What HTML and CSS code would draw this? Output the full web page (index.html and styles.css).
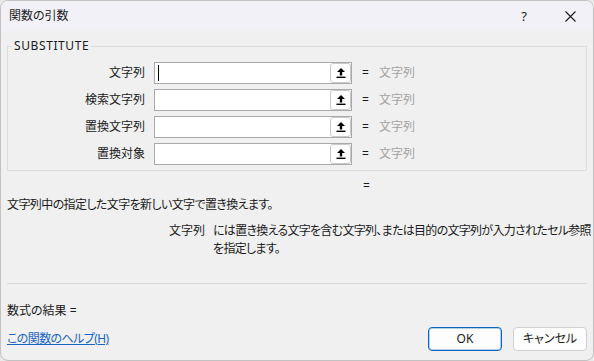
FILE: index.html
```html
<!DOCTYPE html>
<html lang="ja">
<head>
  <meta charset="UTF-8" />
  <meta name="viewport" content="width=device-width, initial-scale=1.0"/>
  <title>関数の引数</title>
  <link rel="stylesheet" href="styles.css">
</head>
<body>

  <div class="dialog">

    <!-- TITLE BAR -->
    <div class="titlebar">
      <div class="title">関数の引数</div>
      <div class="title-btn help">?</div>
      <div class="title-btn close">
        <svg width="11" height="11" viewBox="0 0 11 11">
          <path d="M0.5 0.5 L10.5 10.5 M10.5 0.5 L0.5 10.5" stroke="#1a1a1a" stroke-width="1.1" fill="none"/>
        </svg>
      </div>
    </div>

    <div class="content">

      <fieldset class="args">
        <legend>SUBSTITUTE</legend>

        <div class="arg-grid">
          <div class="arg-label">文字列</div>
          <div class="arg-input"><span class="caret"></span><span class="ref-btn"></span></div>
          <div class="eq">=</div>
          <div class="arg-value">文字列</div>

          <div class="arg-label">検索文字列</div>
          <div class="arg-input"><span></span><span class="ref-btn"></span></div>
          <div class="eq">=</div>
          <div class="arg-value">文字列</div>

          <div class="arg-label">置換文字列</div>
          <div class="arg-input"><span></span><span class="ref-btn"></span></div>
          <div class="eq">=</div>
          <div class="arg-value">文字列</div>

          <div class="arg-label">置換対象</div>
          <div class="arg-input"><span></span><span class="ref-btn"></span></div>
          <div class="eq">=</div>
          <div class="arg-value">文字列</div>
        </div>
      </fieldset>

      <div class="result-eq">=</div>
      <div class="func-desc">文字列中の指定した文字を新しい文字で置き換えます。</div>

      <div class="arg-help">
        <div class="arg-help-name">文字列</div>
        <div class="arg-help-text">には置き換える文字を含む文字列、または目的の文字列が入力されたセル参照を指定します。</div>
      </div>

      <div class="separator"></div>

      <div class="formula-result">数式の結果 =</div>

      <div class="footer">
        <a class="help-link" href="#">この関数のヘルプ(H)</a>
        <div class="buttons">
          <button class="btn btn-primary">OK</button>
          <button class="btn">キャンセル</button>
        </div>
      </div>

    </div>
  </div>

</body>
</html>
```

FILE: styles.css
```css
html {
  background: #e9e9e9;
}

body {
  margin: 0;
  font-family: "Noto Sans", "Noto Sans CJK JP", sans-serif;
  font-size: 12px;
  line-height: 16px;
  color: #1a1a1a;
  font-feature-settings: "palt";
}

.dialog {
  width: 594px;
  height: 361px;
  box-sizing: border-box;
  border: 1px solid #c2c2c2;
  border-radius: 8px;
  overflow: hidden;
  background: #f0f0f0;
  display: flex;
  flex-direction: column;
}

/* title bar */
.titlebar {
  height: 30px;
  flex-shrink: 0;
  background: #f3f1f8;
  display: flex;
  align-items: center;
}

.title {
  flex: 1;
  padding-left: 8px;
}

.title-btn {
  width: 46px;
  height: 30px;
  display: flex;
  align-items: center;
  justify-content: center;
}

.help {
  font-size: 13px;
}

/* body */
.content {
  padding: 0 6px;
  flex: 1;
}

.args {
  margin: 7px 0 0;
  padding: 8px 0 5px;
  border: 1px solid #dcdcdc;
  min-width: 0;
}

.args legend {
  margin-left: 4px;
  padding: 0 2px;
  line-height: 16px;
  letter-spacing: 0.6px;
}

.arg-grid {
  display: grid;
  grid-template-columns: 137px 198px 8px auto;
  column-gap: 9px;
  row-gap: 5px;
  align-items: center;
}

.arg-label {
  text-align: right;
}

.arg-input {
  height: 22px;
  box-sizing: border-box;
  border: 1px solid #a9a9a9;
  background: #fff;
  display: flex;
  justify-content: space-between;
  align-items: center;
  padding-left: 3px;
}

.caret {
  width: 1px;
  height: 16px;
  background: #000;
}

.ref-btn {
  width: 21px;
  height: 20px;
  box-sizing: border-box;
  border: 1px solid #c9c9c9;
  border-radius: 3px;
  background: #fff url("data:image/svg+xml,%3Csvg xmlns='http://www.w3.org/2000/svg' width='10' height='10' viewBox='0 0 10 10'%3E%3Cpath d='M5 0 L9 4 L6.2 4 L6.2 7.6 L3.8 7.6 L3.8 4 L1 4 Z' fill='%23000'/%3E%3Crect x='0.5' y='8.6' width='9' height='1.4' fill='%23000'/%3E%3C/svg%3E") no-repeat center;
}

.eq {
  margin-left: 1px;
}

.arg-value {
  color: #a3a3a3;
  padding-left: 1px;
}

.result-eq {
  margin-top: 7px;
  padding-left: 356px;
}

.func-desc {
  margin-top: 3px;
  letter-spacing: -0.6px;
}

.arg-help {
  margin-top: 9px;
  display: grid;
  grid-template-columns: 198px 378px;
  column-gap: 8px;
  line-height: 18px;
}

.arg-help-name {
  text-align: right;
}

.arg-help-text {
  letter-spacing: -0.7px;
}

.separator {
  margin-top: 25px;
  height: 1px;
  background: #dadada;
}

.formula-result {
  margin-top: 19px;
}

.footer {
  margin-top: 8px;
  display: flex;
  justify-content: space-between;
  align-items: center;
}

.help-link {
  color: #1864c4;
  text-decoration: underline;
  letter-spacing: -0.6px;
}

.buttons {
  display: flex;
  gap: 11px;
}

.btn {
  width: 74px;
  height: 24px;
  font: inherit;
  color: #1a1a1a;
  background: #fdfdfd;
  border: 1px solid #d0d0d0;
  border-radius: 4px;
  padding: 0;
}

.btn-primary {
  border-color: #0a64c2;
  box-shadow: inset 0 0 0 1px rgba(10, 100, 194, 0.3);
}
```
